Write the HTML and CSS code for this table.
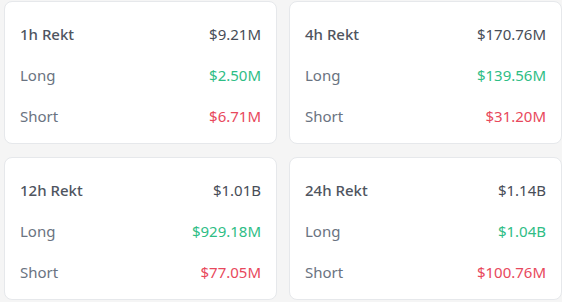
FILE: index.html
```html
<!DOCTYPE html>
<html>
<head>
<meta charset="utf-8">
<link rel="stylesheet" href="styles.css">
</head>
<body>
<div class="grid">
  <div class="card">
    <div class="row head"><span>1h Rekt</span><span class="val">$9.21M</span></div>
    <div class="row"><span>Long</span><span class="up">$2.50M</span></div>
    <div class="row"><span>Short</span><span class="down">$6.71M</span></div>
  </div>
  <div class="card">
    <div class="row head"><span>4h Rekt</span><span class="val">$170.76M</span></div>
    <div class="row"><span>Long</span><span class="up">$139.56M</span></div>
    <div class="row"><span>Short</span><span class="down">$31.20M</span></div>
  </div>
  <div class="card">
    <div class="row head"><span>12h Rekt</span><span class="val">$1.01B</span></div>
    <div class="row"><span>Long</span><span class="up">$929.18M</span></div>
    <div class="row"><span>Short</span><span class="down">$77.05M</span></div>
  </div>
  <div class="card">
    <div class="row head"><span>24h Rekt</span><span class="val">$1.14B</span></div>
    <div class="row"><span>Long</span><span class="up">$1.04B</span></div>
    <div class="row"><span>Short</span><span class="down">$100.76M</span></div>
  </div>
</div>
</body>
</html>
```
FILE: styles.css
```css
html, body {
  margin: 0;
  padding: 0;
  background: #f5f5f5;
}
body {
  font-family: "Noto Sans", "Open Sans", sans-serif;
  font-size: 15px;
  color: #6a7381;
}
.grid {
  display: grid;
  grid-template-columns: 273px 273px;
  grid-auto-rows: 143px;
  column-gap: 12px;
  row-gap: 13px;
  padding: 1px 0 0 4px;
}
.card {
  box-sizing: border-box;
  background: #fff;
  border: 1px solid #e6e8eb;
  border-radius: 8px;
  padding: 20px 15px 0 15px;
  display: flex;
  flex-direction: column;
  gap: 17px;
}
.row {
  display: flex;
  justify-content: space-between;
  align-items: center;
  height: 24px;
  line-height: 24px;
}
.head {
  color: #4f555f;
  font-weight: 500;
}
.val {
  font-weight: 400;
  color: #474d57;
}
.up { color: #2ebd85; }
.down { color: #e8485c; }
```
